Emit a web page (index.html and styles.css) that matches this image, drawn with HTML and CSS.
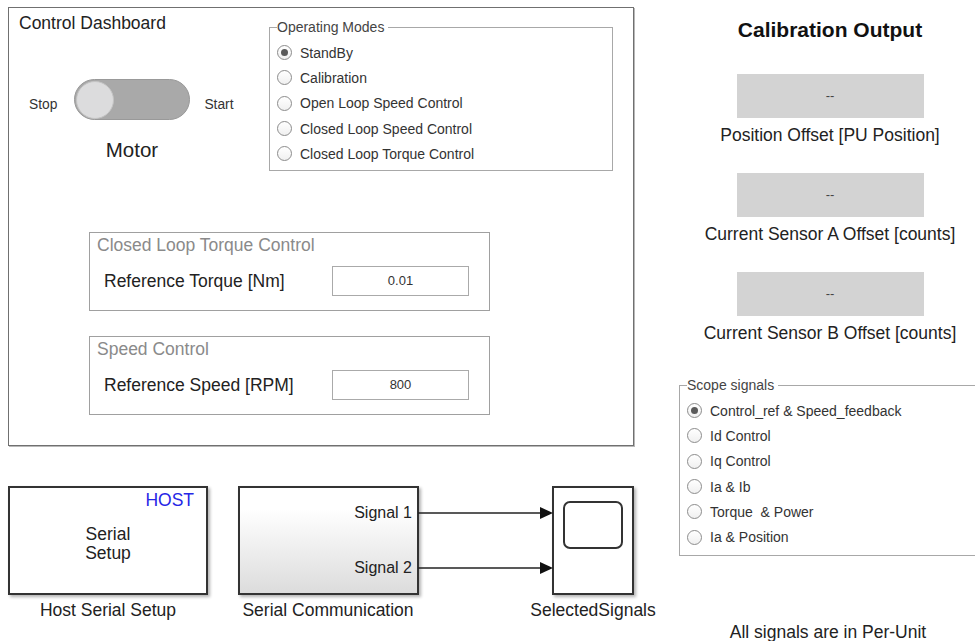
FILE: index.html
```html
<!DOCTYPE html>
<html>
<head>
  <title>Motor Control Model</title>
  <link rel="stylesheet" href="styles.css">
</head>
<body>
  <div class="canvas">

    <!-- dashboard panel -->
    <div class="dashboard">
      <div class="dash-head">
        <div class="motor-col">
          <h2 class="dash-title">Control Dashboard</h2>
          <div class="switch-row">
            <span class="switch-text">Stop</span>
            <div class="switch"><div class="knob"></div></div>
            <span class="switch-text">Start</span>
          </div>
          <div class="motor-label">Motor</div>
        </div>

        <fieldset class="radio-group modes">
          <legend>Operating Modes</legend>
          <div class="radio-item"><span class="radio checked"></span>StandBy</div>
          <div class="radio-item"><span class="radio"></span>Calibration</div>
          <div class="radio-item"><span class="radio"></span>Open Loop Speed Control</div>
          <div class="radio-item"><span class="radio"></span>Closed Loop Speed Control</div>
          <div class="radio-item"><span class="radio"></span>Closed Loop Torque Control</div>
        </fieldset>
      </div>

      <div class="group-box torque">
        <div class="group-title">Closed Loop Torque Control</div>
        <div class="field-row">
          <span class="field-label">Reference Torque [Nm]</span>
          <div class="field-input">0.01</div>
        </div>
      </div>

      <div class="group-box speed">
        <div class="group-title">Speed Control</div>
        <div class="field-row">
          <span class="field-label">Reference Speed [RPM]</span>
          <div class="field-input">800</div>
        </div>
      </div>
    </div>

    <!-- calibration displays -->
    <div class="calibration">
      <h2 class="cal-title">Calibration Output</h2>
      <div class="cal-box first">--</div>
      <div class="cal-label">Position Offset [PU Position]</div>
      <div class="cal-box">--</div>
      <div class="cal-label">Current Sensor A Offset [counts]</div>
      <div class="cal-box">--</div>
      <div class="cal-label">Current Sensor B Offset [counts]</div>
    </div>

    <fieldset class="radio-group scope-signals">
      <legend>Scope signals</legend>
      <div class="radio-item"><span class="radio checked"></span>Control_ref &amp; Speed_feedback</div>
      <div class="radio-item"><span class="radio"></span>Id Control</div>
      <div class="radio-item"><span class="radio"></span>Iq Control</div>
      <div class="radio-item"><span class="radio"></span>Ia &amp; Ib</div>
      <div class="radio-item"><span class="radio"></span>Torque &nbsp;&amp; Power</div>
      <div class="radio-item"><span class="radio"></span>Ia &amp; Position</div>
    </fieldset>

    <div class="note">All signals are in Per-Unit</div>

    <!-- model blocks -->
    <div class="block host-block">
      <span class="host-tag">HOST</span>
      <div class="block-text">
        <div>Serial</div>
        <div>Setup</div>
      </div>
    </div>
    <div class="block-name host-name">Host Serial Setup</div>

    <div class="block comm-block">
      <span class="port port-1">Signal 1</span>
      <span class="port port-2">Signal 2</span>
    </div>
    <div class="block-name comm-name">Serial Communication</div>

    <div class="block scope-block">
      <div class="scope-screen"></div>
    </div>
    <div class="block-name scope-name">SelectedSignals</div>

    <svg class="wires" width="140" height="80" viewBox="0 0 140 80">
      <line x1="0" y1="16" x2="124" y2="16" stroke="#222" stroke-width="1.3"/>
      <polygon points="122,10 135,16 122,22" fill="#111"/>
      <line x1="0" y1="71" x2="124" y2="71" stroke="#222" stroke-width="1.3"/>
      <polygon points="122,65 135,71 122,77" fill="#111"/>
    </svg>
  </div>
</body>
</html>
```

FILE: styles.css
```css
body {
  margin: 0;
  padding: 0;
  background: #fff;
  font-family: "Liberation Sans", Arial, sans-serif;
  color: #222;
}

.canvas {
  position: relative;
  width: 975px;
  height: 641px;
  overflow: hidden;
}

/* dashboard panel */

.dashboard {
  position: absolute;
  left: 8px;
  top: 7px;
  width: 624px;
  height: 437px;
  border: 1px solid #707070;
  box-shadow: 1px 1px 0 #b8b8b8;
}

.dash-head {
  display: flex;
  height: 162px;
}

.motor-col {
  width: 260px;
}

.dash-title {
  margin: 0;
  padding: 5px 0 0 10px;
  font-size: 17.5px;
  font-weight: normal;
  line-height: 20px;
}

.switch-row {
  display: flex;
  align-items: center;
  margin-top: 46px;
  padding-left: 20px;
}

.switch-text {
  font-size: 13.8px;
  color: #333;
  padding-top: 9px;
}

.switch {
  width: 114px;
  height: 39px;
  margin: 0 14px 0 17px;
  border: 1px solid #999;
  border-radius: 21px;
  background: #a9a9a9;
  display: flex;
  align-items: center;
}

.knob {
  width: 38px;
  height: 38px;
  border-radius: 50%;
  background: #dcdcdd;
  border: 1px solid #c4c4c4;
  box-sizing: border-box;
  margin-left: 1px;
}

.motor-label {
  width: 116px;
  margin: 18px 0 0 65px;
  text-align: center;
  font-size: 20.5px;
  line-height: 24px;
}

.radio-group {
  margin: 0;
  padding: 2px 0 0 7px;
  border: 1px solid #a8a8a8;
}

.radio-group legend {
  padding: 0 4px 0 0;
  margin-left: 0;
  font-size: 14px;
  line-height: 16px;
  color: #444;
}

.modes {
  margin-top: 11px;
  width: 344px;
  height: 152px;
  box-sizing: border-box;
  padding-top: 5px;
}

.radio-item {
  display: flex;
  align-items: center;
  height: 25.3px;
  font-size: 14px;
  color: #333;
}

.radio {
  width: 15px;
  height: 15px;
  box-sizing: border-box;
  border: 1px solid #8c8c8c;
  border-radius: 50%;
  background: linear-gradient(#fff, #f0f0f0);
  margin-right: 8px;
  display: flex;
  align-items: center;
  justify-content: center;
}

.radio.checked::after {
  content: "";
  width: 7px;
  height: 7px;
  border-radius: 50%;
  background: #5a5a5a;
}

.group-box {
  margin-left: 80px;
  width: 401px;
  height: 79px;
  box-sizing: border-box;
  border: 1px solid #a0a0a0;
  padding: 2px 0 0 7px;
}

.torque {
  margin-top: 62px;
}

.speed {
  margin-top: 25px;
}

.group-title {
  font-size: 17.5px;
  line-height: 20px;
  color: #8a8a8a;
}

.field-row {
  display: flex;
  align-items: center;
  margin-top: 11px;
  padding-left: 7px;
}

.field-label {
  width: 228px;
  font-size: 17.5px;
  color: #222;
}

.field-input {
  width: 137px;
  height: 30px;
  box-sizing: border-box;
  border: 1px solid #aaa;
  background: #fff;
  font-size: 13px;
  line-height: 28px;
  text-align: center;
  color: #333;
}

/* calibration displays */

.calibration {
  position: absolute;
  left: 680px;
  top: 0;
  width: 300px;
  display: flex;
  flex-direction: column;
  align-items: center;
}

.cal-title {
  margin: 18px 0 0 0;
  font-size: 21px;
  line-height: 23px;
  font-weight: bold;
  color: #111;
}

.cal-box {
  width: 187px;
  height: 44px;
  margin-top: 28px;
  background: #d3d3d3;
  font-size: 13px;
  line-height: 44px;
  text-align: center;
  color: #444;
}

.cal-box.first {
  margin-top: 33px;
}

.cal-label {
  margin-top: 7px;
  font-size: 17.5px;
  line-height: 20px;
  color: #222;
}

.scope-signals {
  position: absolute;
  left: 679px;
  top: 377px;
  width: 320px;
  height: 179px;
  box-sizing: border-box;
  padding-top: 5px;
}

.note {
  position: absolute;
  left: 728px;
  top: 622px;
  width: 200px;
  text-align: center;
  font-size: 17.5px;
  line-height: 20px;
  color: #222;
  white-space: nowrap;
}

/* model blocks */

.block {
  position: absolute;
  top: 486px;
  height: 109px;
  box-sizing: border-box;
  border: 2px solid #333;
  background: #fff;
  box-shadow: 2px 2px 3px rgba(0, 0, 0, 0.3);
}

.host-block {
  left: 8px;
  width: 200px;
  display: flex;
  align-items: center;
  justify-content: center;
}

.host-tag {
  position: absolute;
  right: 12px;
  top: 2px;
  font-size: 17.5px;
  line-height: 20px;
  color: #2626e6;
}

.block-text {
  font-size: 17.5px;
  line-height: 19px;
  text-align: center;
  padding-top: 6px;
  color: #222;
}

.comm-block {
  left: 238px;
  width: 181px;
  background: linear-gradient(#fff 20%, #dcdcdc);
}

.port {
  position: absolute;
  right: 5px;
  font-size: 16px;
  line-height: 18px;
  color: #222;
}

.port-1 {
  top: 16px;
}

.port-2 {
  top: 71px;
}

.scope-block {
  left: 552px;
  width: 82px;
  padding: 13px 0 0 9px;
}

.scope-screen {
  width: 60px;
  height: 48px;
  box-sizing: border-box;
  border: 2px solid #333;
  border-radius: 7px;
}

.block-name {
  position: absolute;
  top: 600px;
  font-size: 17.5px;
  line-height: 20px;
  text-align: center;
  color: #222;
  white-space: nowrap;
}

.host-name {
  left: 8px;
  width: 200px;
}

.comm-name {
  left: 228px;
  width: 200px;
}

.scope-name {
  left: 493px;
  width: 200px;
}

.wires {
  position: absolute;
  left: 418px;
  top: 497px;
}
```
